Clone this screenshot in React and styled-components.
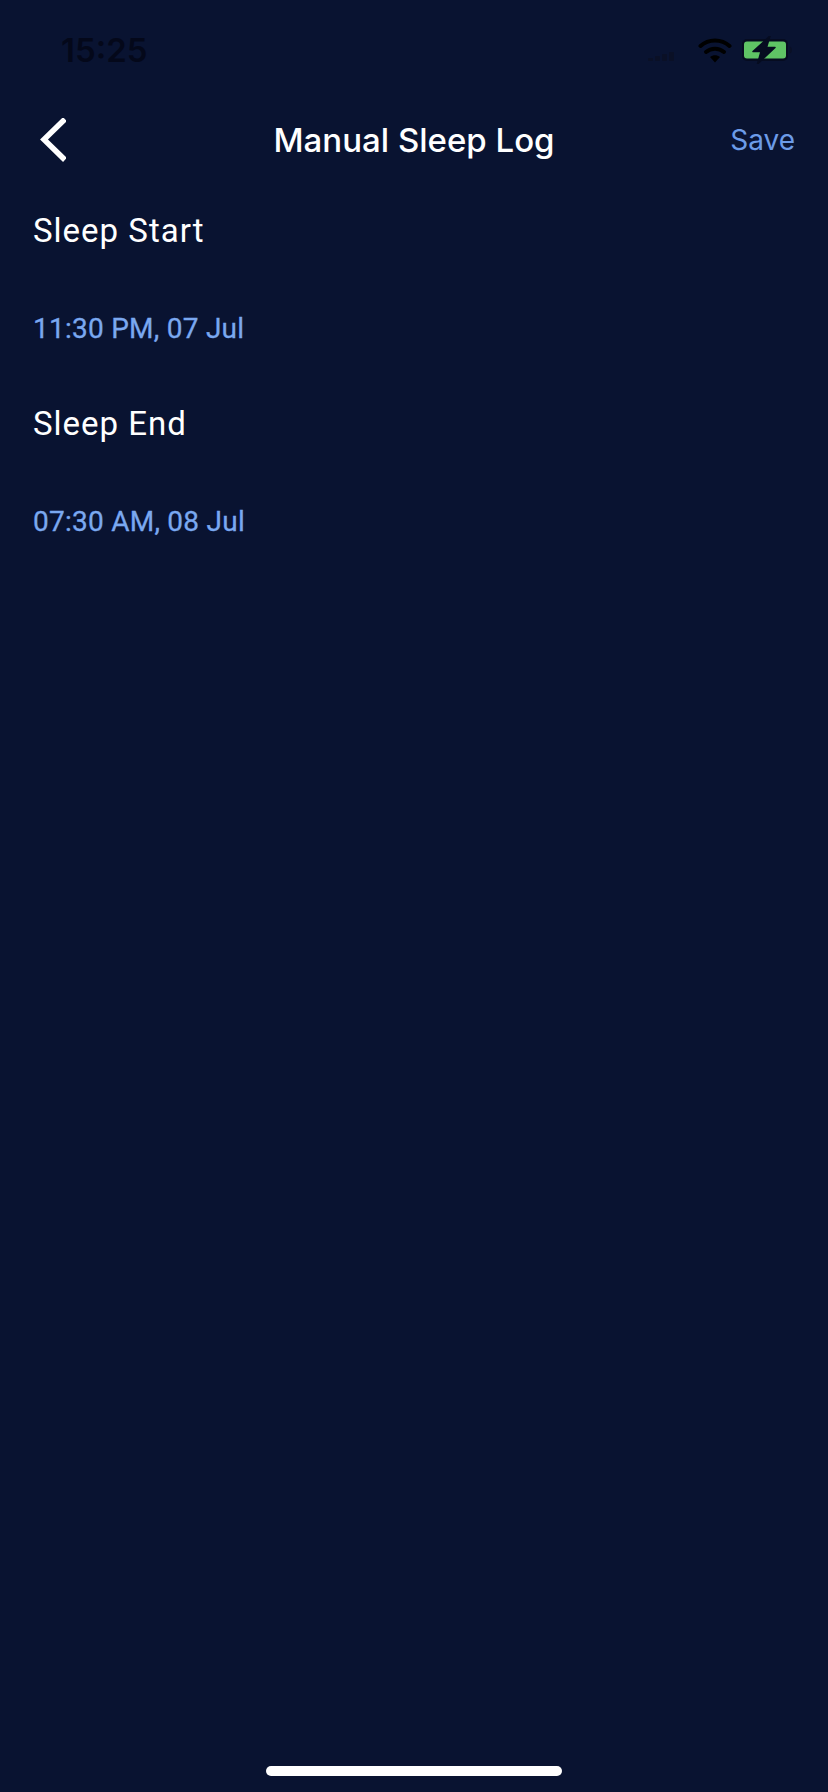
import React from 'react';
import styled, { createGlobalStyle } from 'styled-components';

const GlobalStyle = createGlobalStyle`
  html, body {
    margin: 0;
    padding: 0;
    background: #091331;
  }
`;

const Screen = styled.div`
  width: 828px;
  height: 1792px;
  display: flex;
  flex-direction: column;
  background: #091331;
  font-family: Inter, "Liberation Sans", sans-serif;
  overflow: hidden;
`;

const StatusBar = styled.div`
  height: 88px;
  flex: none;
  display: flex;
  align-items: center;
  justify-content: space-between;
  padding: 12px 34px 0 61px;
  box-sizing: border-box;
`;

const Clock = styled.span`
  font-size: 33px;
  font-weight: 600;
  line-height: 40px;
  color: #04081a;
`;

const StatusIcons = styled.div`
  display: flex;
  align-items: center;
  gap: 10px;
`;

const SignalBars = styled.div`
  display: flex;
  align-items: flex-end;
  gap: 2px;
  height: 10px;
  margin-right: 14px;
  margin-top: 12px;
`;

const SignalBar = styled.span`
  width: 5px;
  height: ${(p) => p.$h}px;
  border-radius: 1px;
  background: #0a1026;
`;

const NavBar = styled.div`
  height: 104px;
  flex: none;
  display: grid;
  grid-template-columns: 1fr auto 1fr;
  align-items: center;
  padding: 0 33px;
  box-sizing: border-box;
`;

const BackButton = styled.button`
  width: 32px;
  height: 48px;
  margin-left: 5px;
  padding: 0;
  border: none;
  background: none;
  display: flex;
  align-items: center;
`;

const Title = styled.h1`
  margin: 0;
  font-size: 33px;
  font-weight: 500;
  line-height: 40px;
  color: #ffffff;
`;

const SaveButton = styled.button`
  justify-self: end;
  padding: 0;
  border: none;
  background: none;
  font-family: inherit;
  font-size: 28px;
  line-height: 40px;
  color: #6c9be8;
`;

const Form = styled.div`
  display: flex;
  flex-direction: column;
  padding: 19px 33px 0;
`;

const Field = styled.div`
  display: flex;
  flex-direction: column;
  height: 193px;
`;

const FieldLabel = styled.span`
  font-family: Roboto, sans-serif;
  font-size: 33px;
  line-height: 40px;
  letter-spacing: 1px;
  color: #ffffff;
`;

const FieldValue = styled.span`
  margin-top: 58px;
  font-family: Roboto, sans-serif;
  font-size: 28px;
  font-weight: 400;
  line-height: 40px;
  letter-spacing: 0.25px;
  color: #7aa8f0;
  -webkit-text-stroke: 0.3px #7aa8f0;
`;

const HomeRow = styled.div`
  margin-top: auto;
  display: flex;
  justify-content: center;
  padding-bottom: 16px;
`;

const HomeBar = styled.div`
  width: 296px;
  height: 10px;
  border-radius: 5px;
  background: #ffffff;
`;

const WifiIcon = () => (
  <svg width="34" height="26" viewBox="0 0 34 26" fill="none">
    <path d="M2.5 9C10.5 1.5 23.5 1.5 31.5 9" stroke="#000" strokeWidth="4" strokeLinecap="round" />
    <path d="M8 15C13 10.5 21 10.5 26 15" stroke="#000" strokeWidth="4" strokeLinecap="round" />
    <path d="M12 20C15 17.5 19 17.5 22 20L17 25.5Z" fill="#000" />
  </svg>
);

const BatteryIcon = () => (
  <svg width="52" height="28" viewBox="0 0 52 28" fill="none">
    <rect x="0" y="3" width="46" height="22" rx="5" fill="#060c20" />
    <rect x="2" y="5.5" width="42" height="17" rx="3" fill="#5fc465" />
    <path d="M47.5 10.5C49.5 11 50 12.5 50 14C50 15.5 49.5 17 47.5 17.5Z" fill="#0a1026" />
    <path d="M28 0L11 15.5H19L15.5 28L33 11.5H24.5Z" fill="#060c20" stroke="#060c20" strokeWidth="1.5" strokeLinejoin="round" />
  </svg>
);

const BackIcon = () => (
  <svg width="28" height="44" viewBox="0 0 28 44" fill="none">
    <path d="M25 3L6 21.5L25 40" stroke="#fff" strokeWidth="5.5" strokeLinecap="square" />
  </svg>
);

export default function App() {
  return (
    <Screen>
      <GlobalStyle />
      <StatusBar>
        <Clock>15:25</Clock>
        <StatusIcons>
          <SignalBars>
            {[3, 5, 7, 9].map((h) => (
              <SignalBar key={h} $h={h} />
            ))}
          </SignalBars>
          <WifiIcon />
          <BatteryIcon />
        </StatusIcons>
      </StatusBar>
      <NavBar>
        <BackButton aria-label="Back">
          <BackIcon />
        </BackButton>
        <Title>Manual Sleep Log</Title>
        <SaveButton>Save</SaveButton>
      </NavBar>
      <Form>
        <Field>
          <FieldLabel>Sleep Start</FieldLabel>
          <FieldValue>11:30 PM, 07 Jul</FieldValue>
        </Field>
        <Field>
          <FieldLabel>Sleep End</FieldLabel>
          <FieldValue>07:30 AM, 08 Jul</FieldValue>
        </Field>
      </Form>
      <HomeRow>
        <HomeBar />
      </HomeRow>
    </Screen>
  );
}
